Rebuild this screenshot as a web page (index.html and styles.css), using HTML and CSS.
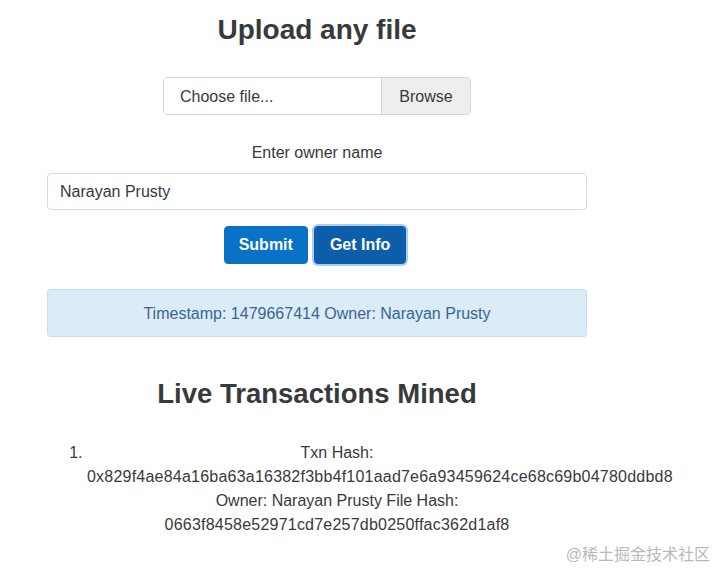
FILE: index.html
```html
<!DOCTYPE html>
<html lang="en">
<head>
    <meta charset="UTF-8">
    <meta name="viewport" content="width=device-width, initial-scale=1.0">
    <title>Upload any file</title>
    <link rel="stylesheet" href="styles.css">
</head>
<body>
    <div class="container">
        <h3 class="title">Upload any file</h3>

        <div class="file-row">
            <label class="custom-file">
                <span class="file-name">Choose file...</span>
                <span class="file-browse">Browse</span>
            </label>
        </div>

        <div class="form-group">
            <label for="owner">Enter owner name</label>
            <input type="text" id="owner" class="form-control" value="Narayan Prusty">
        </div>

        <div class="btn-row">
            <button class="btn btn-primary">Submit</button>
            <button class="btn btn-primary active">Get Info</button>
        </div>

        <div class="alert-info">
            Timestamp: 1479667414 Owner: Narayan Prusty
        </div>

        <h3 class="title live">Live Transactions Mined</h3>

        <ol class="txn-list">
            <li>Txn Hash: <span class="hash">0x829f4ae84a16ba63a16382f3bb4f101aad7e6a93459624ce68c69b04780ddbd8</span> Owner: Narayan Prusty File Hash: <span class="hash">0663f8458e52971cd7e257db0250ffac362d1af8</span></li>
        </ol>
    </div>

    <div class="watermark">@稀土掘金技术社区</div>
</body>
</html>
```

FILE: styles.css
```css
body {
    font-family: "Liberation Sans", Arial, sans-serif;
    font-size: 16px;
    line-height: 1.5;
    color: #373a3c;
    background-color: #fff;
    margin: 0;
}
.container {
    width: 540px;
    margin-left: 47px;
    padding-top: 13px;
}
.title {
    font-size: 28px;
    font-weight: bold;
    line-height: 1.2;
    text-align: center;
    margin: 0 0 30px;
}
.file-row {
    display: flex;
    justify-content: center;
    margin-bottom: 26px;
}
.custom-file {
    display: flex;
    width: 308px;
    height: 38px;
    border: 1px solid #d6d6d6;
    border-radius: 4px;
    overflow: hidden;
    box-sizing: border-box;
}
.file-name {
    flex: 1;
    padding: 7px 16px 5px;
    background-color: #fff;
}
.file-browse {
    width: 88px;
    padding: 7px 0 5px;
    text-align: center;
    background-color: #eeeeee;
    border-left: 1px solid #d6d6d6;
}
.form-group {
    text-align: center;
    margin-bottom: 16px;
}
.form-group label {
    display: block;
    margin-bottom: 8px;
}
.form-control {
    display: block;
    width: 100%;
    height: 37px;
    box-sizing: border-box;
    padding: 7px 12px 5px;
    font-family: inherit;
    font-size: 16px;
    color: #373a3c;
    border: 1px solid #d9d9d9;
    border-radius: 4px;
}
.btn-row {
    display: flex;
    justify-content: center;
    gap: 6px;
    padding-right: 4px;
    margin-bottom: 25px;
}
.btn {
    font-family: inherit;
    font-size: 16px;
    font-weight: bold;
    line-height: 1.5;
    padding: 6px 14px;
    border: 1px solid transparent;
    border-radius: 4px;
    height: 38px;
    cursor: pointer;
}
.btn-primary {
    color: #fff;
    background-color: #0a72c6;
    border-color: #0a72c6;
}
.btn-primary.active {
    padding: 6px 15px;
    background-color: #0c5eab;
    border-color: #0c5eab;
    box-shadow: 0 0 0 2px #a9cdf0;
}
.alert-info {
    color: #3b6590;
    background-color: #d9ecf7;
    border: 1px dotted #b9cfdc;
    border-radius: 4px;
    padding: 12px 16px 10px;
    text-align: center;
    margin-bottom: 40px;
}
.live {
    font-size: 27.5px;
    margin-bottom: 31px;
}
.txn-list {
    margin: 0;
    padding-left: 40px;
    text-align: center;
}
.hash {
    letter-spacing: 0.22px;
}
.watermark {
    position: absolute;
    right: 7px;
    bottom: 6px;
    font-size: 16px;
    color: #b9b9b9;
    font-family: "Liberation Sans", "Noto Sans CJK SC", sans-serif;
}
```
